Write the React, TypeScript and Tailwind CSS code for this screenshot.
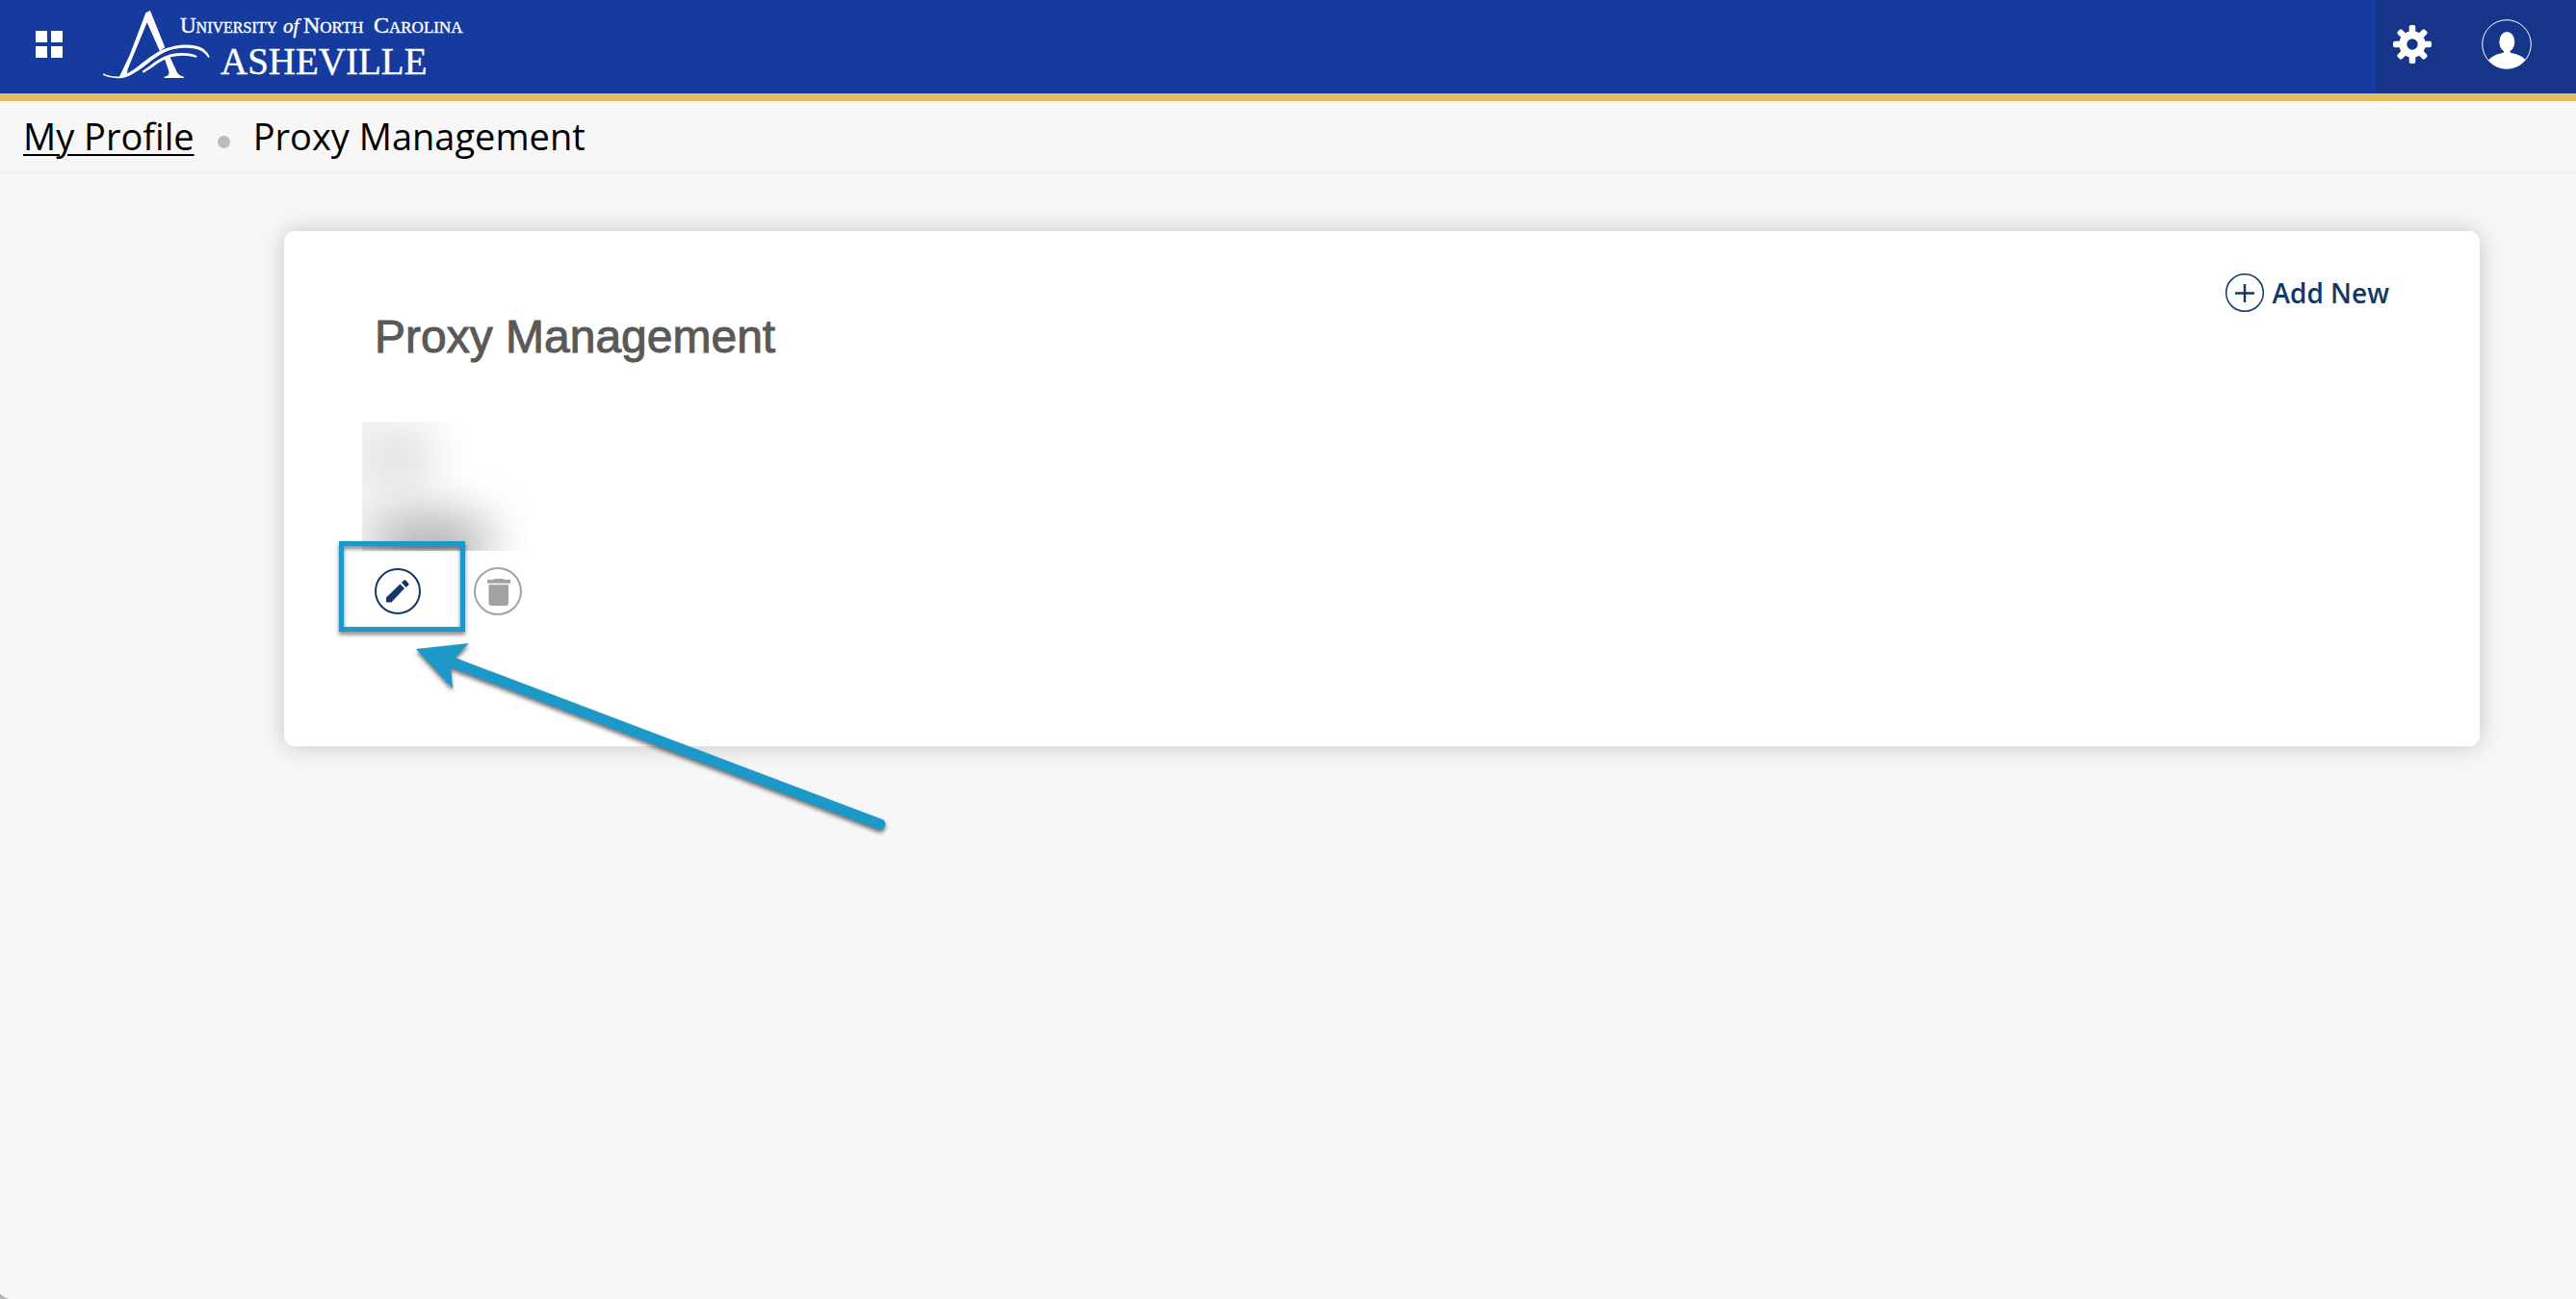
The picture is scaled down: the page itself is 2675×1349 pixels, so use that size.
import { useState } from "react";

const TEETH = [0, 45, 90, 135, 180, 225, 270, 315];

function Logo() {
    return (
        <svg width="388" height="86" viewBox="0 0 388 86" role="img" aria-label="University of North Carolina Asheville">
            <g transform="scale(0.3333)" fill="#fff">
                <path d="M154 40L168 33L214 148Q206 153 198 160L158 70L98 215L94 240L70 242L80 222L104 172Z" />
                <path d="M212 180L228 174L250 222Q256 236 273 239L273 243L212 243L212 239Q230 236 226 222Z" />
                <path d="M21 229Q54 243 80 237C120 222 150 186 192 162C240 136 300 132 334 152Q348 163 353 177L349 180C335 158 318 152 290 150C240 146 210 160 168 192C128 224 104 240 76 243Q46 246 21 234Z" />
                <path d="M143 222C175 202 200 172 250 166Q292 162 314 175L312 179Q270 168 232 178C196 190 176 212 147 227Z" />
            </g>
            <g fill="#fff" stroke="#fff" strokeWidth="0.4" className="font-['Liberation_Serif',serif]">
                <g fontSize="24" style={{ fontVariant: "small-caps" }}>
                    <text x="87" y="34" fontSize="23">University</text>
                    <text x="215" y="34">North</text>
                    <text x="288" y="34">Carolina</text>
                </g>
                <text x="194" y="34" fontSize="21" fontStyle="italic">of</text>
                <text x="129" y="77" fontSize="39">ASHEVILLE</text>
            </g>
        </svg>
    );
}

function GearIcon() {
    return (
        <svg width="40" height="40" viewBox="-20 -20 40 40" aria-hidden="true">
            {TEETH.map((angle) => (
                <rect key={angle} x="-3.3" y="-20" width="6.6" height="13" rx="2" fill="#fff" transform={`rotate(${angle})`} />
            ))}
            <circle r="9.7" fill="none" stroke="#fff" strokeWidth="8" />
        </svg>
    );
}

function UserIcon() {
    return (
        <svg width="52" height="52" viewBox="0 0 52 52" aria-hidden="true">
            <circle cx="26" cy="26" r="25.3" fill="none" stroke="#fff" strokeWidth="1" />
            <ellipse cx="26.3" cy="23.5" rx="8" ry="10.5" fill="#fff" />
            <path d="M23 31H29.5V34Q30 35 33 35.5Q41 37 45.5 42A25 25 0 0 1 7 42.5Q12 37 19.5 35.5Q22.500 35 23 34Z" fill="#fff" />
        </svg>
    );
}

function PencilIcon() {
    return (
        <svg width="24" height="24" viewBox="0 0 24 24" fill="#143865" aria-hidden="true">
            <path d="M0 18.500L14.500 4.500L19 9L5.500 23.500H0ZM16 3L18.500 0.500Q19.500 0 20.500 0.800L23.300 4Q24 5 23 6L20.500 8Z" />
        </svg>
    );
}

function TrashIcon() {
    return (
        <svg width="24" height="28" viewBox="0 0 24 28" fill="#9fa3a3" className="mt-0.5 ml-0.5" aria-hidden="true">
            <path d="M0 1H7V0H17V1H24V4.700H0ZM1.500 6.200H22V25Q22 28 19 28H4.500Q1.500 28 1.500 25Z" />
        </svg>
    );
}

function Arrow() {
    return (
        <svg
            className="pointer-events-none absolute left-[137px] top-[428px] overflow-visible drop-shadow-[0_3px_2px_rgba(0,0,0,0.55)]"
            width="488"
            height="194"
            viewBox="0 0 488 194"
            aria-hidden="true"
        >
            <path d="M38 20L482 188" stroke="#1c99c8" strokeWidth="11" strokeLinecap="round" />
            <path d="M0 6L55 0L40 15L36 25L38 47Z" fill="#1c99c8" />
        </svg>
    );
}

export default function App() {
    const [menuOpen, setMenuOpen] = useState(false);

    return (
        <div className="relative min-h-screen bg-[#f7f7f7] font-['Open_Sans',sans-serif] text-black">
            <header className="flex h-[105px] justify-between border-b-8 border-[#e1bd60] bg-[#163b9e]">
                <div className="flex items-start">
                    <button
                        type="button"
                        aria-label="Menu"
                        aria-expanded={menuOpen}
                        onClick={() => setMenuOpen(!menuOpen)}
                        className="mt-8 ml-[37px] grid grid-cols-2 gap-1 cursor-pointer"
                    >
                        <span className="size-3 bg-white" />
                        <span className="size-3 bg-white" />
                        <span className="size-3 bg-white" />
                        <span className="size-3 bg-white" />
                    </button>
                    <a href="#" className="ml-[35px]">
                        <Logo />
                    </a>
                </div>
                <div className="flex items-start gap-[52px] bg-[#173588] pr-[46px] pl-[18px]">
                    <button type="button" aria-label="Settings" className="mt-[26px] cursor-pointer">
                        <GearIcon />
                    </button>
                    <button type="button" aria-label="Account" className="mt-5 cursor-pointer">
                        <UserIcon />
                    </button>
                </div>
            </header>

            <nav aria-label="Breadcrumb" className="flex h-[75px] items-center border-b-2 border-[#eeeeee] px-6 text-[38px]">
                <a href="#" className="underline decoration-2 underline-offset-4">My Profile</a>
                <span className="mx-6 mt-3 size-[13px] rounded-full bg-[#bbbbbb]" />
                <span>Proxy Management</span>
            </nav>

            <main className="pt-[60px] pr-[100px] pl-[295px]">
                <section className="relative min-h-[535px] rounded-[11px] bg-white px-[94px] pt-11 shadow-[0_0_26px_rgba(0,0,0,0.2)]">
                    <div className="flex justify-end">
                        <button type="button" className="flex items-center gap-2 text-[28px] leading-10 font-semibold text-[#143865] cursor-pointer">
                            <svg width="40" height="40" viewBox="0 0 40 40" fill="none" stroke="#143865" aria-hidden="true">
                                <circle cx="20" cy="20" r="19.3" strokeWidth="1.5" />
                                <path d="M10 20.500H30M20 11V30" strokeWidth="2.500" />
                            </svg>
                            Add New
                        </button>
                    </div>
                    <h1 className="mt-0.5 font-['Liberation_Sans',sans-serif] text-[48px] leading-[48px] text-[#595959] [-webkit-text-stroke:1px_#595959]">
                        Proxy Management
                    </h1>

                    {/* blurred-out name */}
                    <div className="mt-16 -ml-[13px] h-[134px] w-[172px] overflow-hidden">
                        <div className="relative h-full bg-[linear-gradient(to_right,rgba(0,0,0,0.04),transparent_110px)]">
                            <div className="absolute top-[18px] left-[8px] h-10 w-16 rounded-full bg-black/15 blur-xl" />
                            <div className="absolute top-[98px] left-[14px] h-14 w-[120px] rounded-full bg-black/30 blur-xl" />
                        </div>
                    </div>

                    <div className="mt-[17px] flex items-center gap-[55px]">
                        <button type="button" aria-label="Edit proxy" className="flex size-12 items-center justify-center rounded-full border-2 border-[#143865] cursor-pointer">
                            <PencilIcon />
                        </button>
                        <button type="button" aria-label="Delete proxy" className="flex size-[50px] items-center justify-center rounded-full border-2 border-[#9fa3a3] cursor-pointer">
                            <TrashIcon />
                        </button>
                    </div>

                    <div className="pointer-events-none absolute top-[322px] left-[57px] h-[94px] w-[131px] border-5 border-[#1c99c8] drop-shadow-[0_3px_2px_rgba(0,0,0,0.5)]" />
                    <Arrow />
                </section>
            </main>

            <svg className="absolute bottom-0 left-0" width="9" height="6" viewBox="0 0 9 6" aria-hidden="true">
                <path d="M0 0Q3 4 9 6H0Z" fill="#b5b5b5" />
            </svg>
        </div>
    );
}
